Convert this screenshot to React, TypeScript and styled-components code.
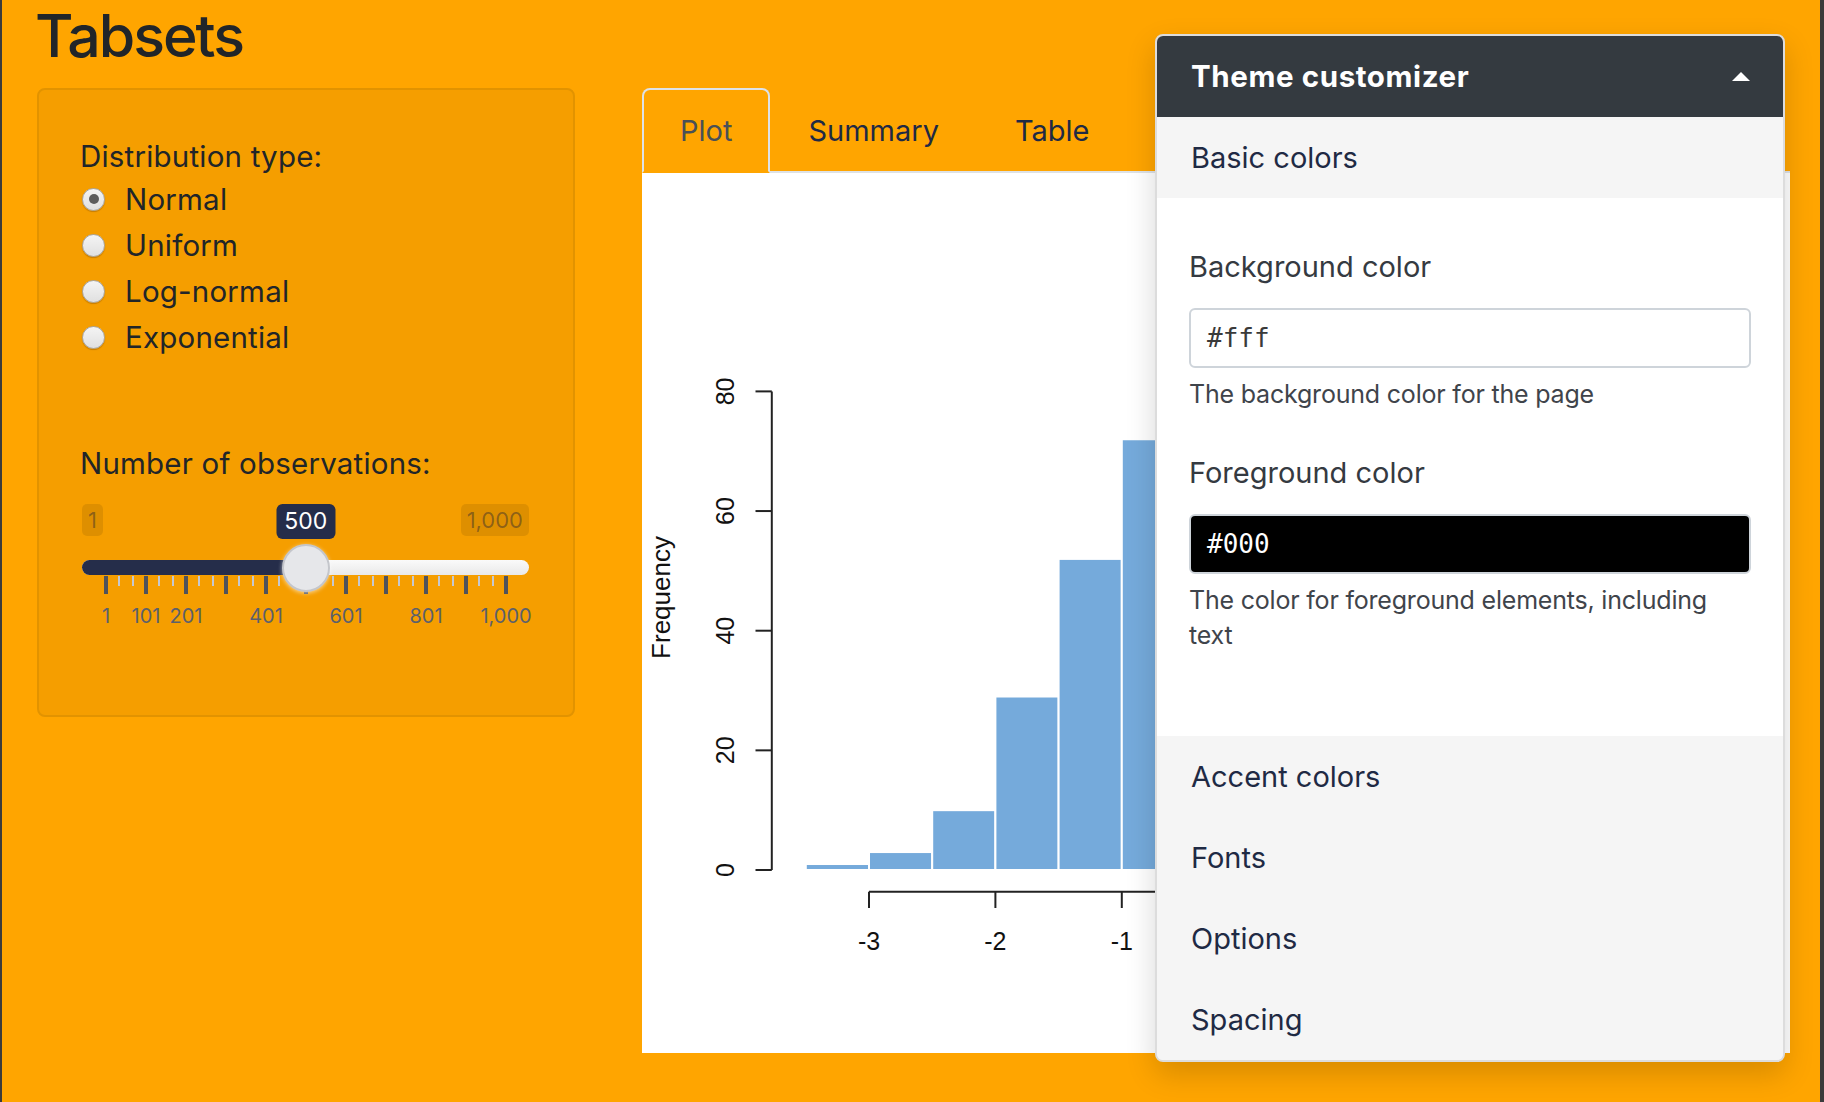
import React from "react";
import styled, { createGlobalStyle } from "styled-components";

const GlobalStyle = createGlobalStyle`
  html, body { margin: 0; padding: 0; }
  body {
    background: #ffa500;
    font-family: Inter, "Noto Sans", sans-serif;
    color: #212529;
    min-height: 100vh;
    box-shadow: inset 2px 0 0 #3b3b3b, inset -4px 0 0 #3b3b3b;
  }
  * { box-sizing: border-box; }
`;

const Page = styled.div`
  position: relative;
  width: 1824px;
  height: 1102px;
  overflow: hidden;
  padding-left: 37px;
`;

const Title = styled.h1`
  margin: 0 0 16px -2px;
  font-size: 59px;
  font-weight: 500;
  line-height: 72px;
  letter-spacing: -2px;
  color: #212529;
`;

const Row = styled.div`
  display: flex;
  align-items: flex-start;
  gap: 67px;
`;

const Well = styled.div`
  flex: 0 0 538px;
  height: 629px;
  background: #f59e00;
  border: 2px solid #e29300;
  border-radius: 8px;
  padding: 46px 44px 0 41px;
`;

const FieldLabel = styled.div<{ $gap?: number }>`
  font-size: 29.5px;
  line-height: 40px;
  letter-spacing: 0.2px;
  margin-top: ${(p) => p.$gap ?? 0}px;
`;

const RadioGroup = styled.div`
  display: flex;
  flex-direction: column;
`;

const RadioRow = styled.label`
  display: flex;
  align-items: center;
  height: 46px;
  font-size: 29.5px;
  letter-spacing: 0.2px;
`;

const RadioCircle = styled.span<{ $checked?: boolean }>`
  width: 23px;
  height: 23px;
  margin: 0 20px 0 2px;
  border-radius: 50%;
  border: 1.5px solid #a6a6a6;
  background: linear-gradient(#f4f4f4, #e0e0e0);
  box-shadow: 0 1px 1px rgba(120, 70, 0, 0.35);
  display: flex;
  align-items: center;
  justify-content: center;
  &::after {
    content: "";
    width: 10px;
    height: 10px;
    border-radius: 50%;
    background: #5c5c5c;
    display: ${(p) => (p.$checked ? "block" : "none")};
  }
`;

/* slider */
const Slider = styled.div`
  position: relative;
  margin-left: 2px;
  width: 447px;
`;

const SliderTop = styled.div`
  display: flex;
  justify-content: space-between;
  align-items: flex-start;
  margin-top: 21px;
  height: 35px;
`;

const MinMax = styled.span`
  font-size: 22px;
  line-height: 32px;
  padding: 0 6px;
  border-radius: 5px;
  background: rgba(0, 0, 0, 0.09);
  color: rgba(40, 40, 50, 0.45);
`;

const Single = styled.span`
  position: absolute;
  top: 0;
  transform: translateX(-50%);
  font-size: 23px;
  line-height: 35px;
  padding: 0 8px;
  border-radius: 6px;
  background: #252d4a;
  color: #ffffff;
`;

const Track = styled.div`
  position: relative;
  margin-top: 21px;
  height: 15px;
  border-radius: 8px;
  background: linear-gradient(#fafafa, #e9e9e9);
`;

const Fill = styled.div`
  height: 15px;
  border-radius: 8px 0 0 8px;
  background: #252d4a;
`;

const Handle = styled.span`
  position: absolute;
  top: 50%;
  width: 48px;
  height: 48px;
  border-radius: 50%;
  transform: translate(-50%, -50%);
  background: #e6e7ea;
  border: 2px solid #c4c6cb;
  box-shadow: 0 1px 4px rgba(255, 255, 255, 0.6);
  z-index: 2;
`;

const TickRow = styled.div`
  display: flex;
  justify-content: space-between;
  align-items: flex-start;
  margin: 1px 0 0 24px;
  width: 400px;
  height: 18px;
`;

const Tick = styled.span<{ $major?: boolean }>`
  width: ${(p) => (p.$major ? 4 : 2)}px;
  margin: 0 ${(p) => (p.$major ? -2 : -1)}px;
  height: ${(p) => (p.$major ? 18 : 10)}px;
  background: ${(p) => (p.$major ? "#4f535b" : "#c5c8cf")};
`;

const GridLabels = styled.div`
  display: flex;
  justify-content: space-between;
  margin: 11px 0 0 24px;
  width: 400px;
`;

const GridLabel = styled.span<{ $hidden?: boolean }>`
  width: 0;
  display: flex;
  justify-content: center;
  white-space: nowrap;
  font-size: 20px;
  line-height: 22px;
  color: #5b606c;
  visibility: ${(p) => (p.$hidden ? "hidden" : "visible")};
`;

/* main */
const Main = styled.div`
  flex: 0 0 1148px;
  display: flex;
  flex-direction: column;
`;

const Nav = styled.div`
  display: flex;
  border-bottom: 2px solid #dee2e6;
`;

const TabLink = styled.div<{ $active?: boolean }>`
  margin-bottom: -2px;
  padding: 20px 36px 19px;
  font-size: 29px;
  line-height: 42px;
  border: 2px solid transparent;
  border-radius: 8px 8px 0 0;
  color: ${(p) => (p.$active ? "#495057" : "#1f2a44")};
  background: ${(p) => (p.$active ? "#ffa500" : "transparent")};
  border-color: ${(p) =>
    p.$active ? "#dee2e6 #dee2e6 transparent" : "transparent"};
`;

const PlotArea = styled.div`
  height: 880px;
  background: #ffffff;
`;

/* theme customizer */
const Panel = styled.aside`
  position: absolute;
  left: 1155px;
  top: 34px;
  width: 630px;
  border: 2px solid #dcdcdc;
  border-radius: 8px;
  overflow: hidden;
  background: #f5f5f5;
  box-shadow: 0 12px 30px rgba(0, 0, 0, 0.16);
  z-index: 5;
`;

const PanelHeader = styled.div`
  display: flex;
  align-items: center;
  justify-content: space-between;
  padding: 19px 33px 20px 34px;
  background: #343a40;
  color: #ffffff;
  font-size: 29.5px;
  font-weight: 700;
  line-height: 42px;
  letter-spacing: 0.6px;
`;

const SectionHeader = styled.div`
  padding: 19px 34px 18px;
  font-size: 29px;
  line-height: 44px;
  color: #1f2a44;
  background: #f5f5f5;
`;

const PanelBody = styled.div`
  height: 538px;
  background: #ffffff;
  padding: 48px 32px 0;
`;

const ControlLabel = styled.div<{ $gap?: number }>`
  margin-top: ${(p) => p.$gap ?? 0}px;
  font-size: 29px;
  line-height: 42px;
  color: #353a41;
`;

const ColorInput = styled.div<{ $bg: string; $fg: string }>`
  margin-top: 20px;
  height: 60px;
  width: 562px;
  display: flex;
  align-items: center;
  padding: 0 16px;
  border: 2px solid #ced4da;
  border-radius: 6px;
  background: ${(p) => p.$bg};
  color: ${(p) => p.$fg};
  font-family: "DejaVu Sans Mono", "Liberation Mono", monospace;
  font-size: 26px;
`;

const Help = styled.div`
  margin-top: 9px;
  font-size: 25px;
  line-height: 35px;
  letter-spacing: -0.2px;
  color: #3f444b;
`;

const SLIDER_MIN = 1;
const SLIDER_MAX = 1000;
const VALUE = 500;
const GRID_LEFT = 24;
const GRID_W = 400;
const valueX = GRID_LEFT + ((VALUE - SLIDER_MIN) / (SLIDER_MAX - SLIDER_MIN)) * GRID_W;

const gridValues = [1, 101, 201, 301, 401, 501, 601, 701, 801, 901, 1000];
const hiddenLabels = new Set([301, 501, 701, 901]);

function Histogram() {
  const X = (v: number) => 227 + (v + 3) * 126.4;
  const Y = (c: number) => 697 - c * 5.9825;
  const counts = [1, 3, 10, 29, 52, 72, 88, 90, 70, 50, 25, 10, 3, 1];
  const font = '"Liberation Sans", Arial, sans-serif';
  return (
    <svg width="1148" height="880" viewBox="0 0 1148 880">
      {counts.map((c, i) => {
        const a = -3.5 + i * 0.5;
        return (
          <rect
            key={i}
            x={X(a)}
            y={Y(c)}
            width={X(a + 0.5) - X(a)}
            height={697 - Y(c)}
            fill="#75aadb"
            stroke="#ffffff"
            strokeWidth={2}
          />
        );
      })}
      <line x1={129.8} y1={Y(80)} x2={129.8} y2={Y(0)} stroke="#222" strokeWidth={2} />
      {[0, 20, 40, 60, 80].map((v) => (
        <g key={v}>
          <line x1={113.5} y1={Y(v)} x2={129.8} y2={Y(v)} stroke="#222" strokeWidth={2} />
          <text
            x={92.3}
            y={Y(v)}
            transform={`rotate(-90 92.3 ${Y(v)})`}
            textAnchor="middle"
            fontFamily={font}
            fontSize={25}
            fill="#111"
          >
            {v}
          </text>
        </g>
      ))}
      <text
        x={27.6}
        y={424.5}
        transform="rotate(-90 27.6 424.5)"
        textAnchor="middle"
        fontFamily={font}
        fontSize={26}
        fill="#111"
      >
        Frequency
      </text>
      <line x1={X(-3)} y1={718.7} x2={X(3)} y2={718.7} stroke="#222" strokeWidth={2} />
      {[-3, -2, -1, 0, 1, 2, 3].map((v) => (
        <line key={v} x1={X(v)} y1={718.7} x2={X(v)} y2={735} stroke="#222" strokeWidth={2} />
      ))}
      {[-3, -2, -1].map((v) => (
        <text key={v} x={X(v)} y={777} textAnchor="middle" fontFamily={font} fontSize={25} fill="#111">
          {v}
        </text>
      ))}
    </svg>
  );
}

const radios = [
  { label: "Normal", checked: true },
  { label: "Uniform" },
  { label: "Log-normal" },
  { label: "Exponential" },
];

export default function App() {
  const ticks: { major: boolean }[] = [];
  for (let i = 0; i < 10; i++) {
    ticks.push({ major: true }, { major: false }, { major: false });
  }
  ticks.push({ major: true });

  return (
    <>
      <GlobalStyle />
      <Page>
        <Title>Tabsets</Title>
        <Row>
          <Well>
            <FieldLabel>Distribution type:</FieldLabel>
            <RadioGroup>
              {radios.map((r) => (
                <RadioRow key={r.label}>
                  <RadioCircle $checked={r.checked} />
                  {r.label}
                </RadioRow>
              ))}
            </RadioGroup>
            <FieldLabel $gap={83}>Number of observations:</FieldLabel>
            <Slider>
              <SliderTop>
                <MinMax>1</MinMax>
                <MinMax>1,000</MinMax>
              </SliderTop>
              <Single style={{ left: valueX }}>500</Single>
              <Track>
                <Fill style={{ width: valueX }} />
                <Handle style={{ left: valueX }} />
              </Track>
              <TickRow>
                {ticks.map((t, i) => (
                  <Tick key={i} $major={t.major} />
                ))}
              </TickRow>
              <GridLabels>
                {gridValues.map((v) => (
                  <GridLabel key={v} $hidden={hiddenLabels.has(v)}>
                    {v.toLocaleString("en-US")}
                  </GridLabel>
                ))}
              </GridLabels>
            </Slider>
          </Well>
          <Main>
            <Nav>
              <TabLink $active>Plot</TabLink>
              <TabLink>Summary</TabLink>
              <TabLink>Table</TabLink>
            </Nav>
            <PlotArea>
              <Histogram />
            </PlotArea>
          </Main>
        </Row>
        <Panel>
          <PanelHeader>
            Theme customizer
            <svg width="18" height="9" viewBox="0 0 18 9">
              <polygon points="0,9 9,0 18,9" fill="#ffffff" />
            </svg>
          </PanelHeader>
          <SectionHeader>Basic colors</SectionHeader>
          <PanelBody>
            <ControlLabel>Background color</ControlLabel>
            <ColorInput $bg="#ffffff" $fg="#3a3a3a">#fff</ColorInput>
            <Help>The background color for the page</Help>
            <ControlLabel $gap={40}>Foreground color</ControlLabel>
            <ColorInput $bg="#000000" $fg="#ffffff">#000</ColorInput>
            <Help>
              The color for foreground elements, including
              <br />
              text
            </Help>
          </PanelBody>
          <SectionHeader>Accent colors</SectionHeader>
          <SectionHeader>Fonts</SectionHeader>
          <SectionHeader>Options</SectionHeader>
          <SectionHeader>Spacing</SectionHeader>
        </Panel>
      </Page>
    </>
  );
}
